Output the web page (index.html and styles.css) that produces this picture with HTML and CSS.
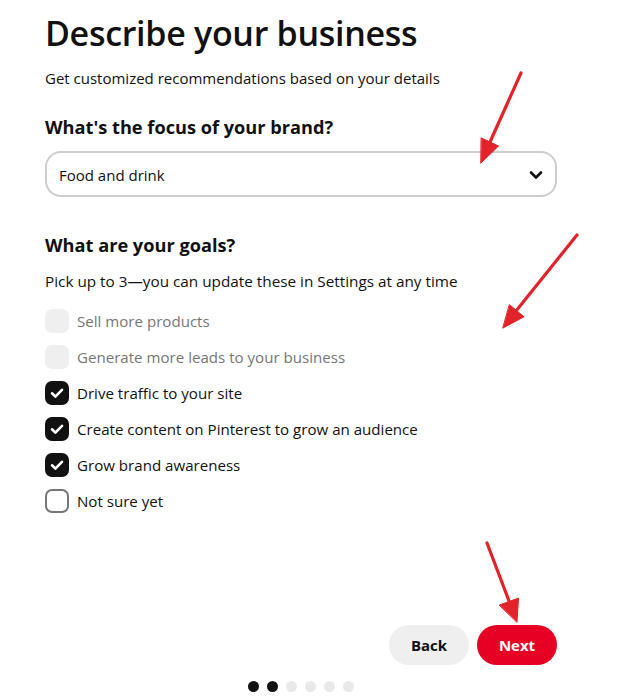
FILE: index.html
```html
<!DOCTYPE html>
<html lang="en">
<head>
<meta charset="utf-8">
<title>Describe your business</title>
<link rel="stylesheet" href="styles.css">
</head>
<body>
<main class="page">
  <h1 class="title">Describe your business</h1>
  <p class="subtitle">Get customized recommendations based on your details</p>

  <h2 class="heading heading-focus">What's the focus of your brand?</h2>
  <div class="select">
    <span class="select-value">Food and drink</span>
    <svg class="chevron" width="14" height="10" viewBox="0 0 14 10"><path d="M2 2.5 L7 7.5 L12 2.5" fill="none" stroke="#111" stroke-width="2.6" stroke-linecap="round" stroke-linejoin="round"/></svg>
  </div>

  <h2 class="heading heading-goals">What are your goals?</h2>
  <p class="hint">Pick up to 3—you can update these in Settings at any time</p>

  <ul class="options">
    <li class="option disabled"><span class="box"></span><span class="label">Sell more products</span></li>
    <li class="option disabled"><span class="box"></span><span class="label">Generate more leads to your business</span></li>
    <li class="option checked"><span class="box"><svg width="24" height="24" viewBox="0 0 24 24"><path d="M7 12.3 L10.4 15.6 L17 8.8" fill="none" stroke="#fff" stroke-width="2.6" stroke-linecap="round" stroke-linejoin="round"/></svg></span><span class="label">Drive traffic to your site</span></li>
    <li class="option checked"><span class="box"><svg width="24" height="24" viewBox="0 0 24 24"><path d="M7 12.3 L10.4 15.6 L17 8.8" fill="none" stroke="#fff" stroke-width="2.6" stroke-linecap="round" stroke-linejoin="round"/></svg></span><span class="label">Create content on Pinterest to grow an audience</span></li>
    <li class="option checked"><span class="box"><svg width="24" height="24" viewBox="0 0 24 24"><path d="M7 12.3 L10.4 15.6 L17 8.8" fill="none" stroke="#fff" stroke-width="2.6" stroke-linecap="round" stroke-linejoin="round"/></svg></span><span class="label">Grow brand awareness</span></li>
    <li class="option unchecked"><span class="box"></span><span class="label">Not sure yet</span></li>
  </ul>

  <div class="actions">
    <button class="btn btn-back">Back</button>
    <button class="btn btn-next">Next</button>
  </div>

  <div class="dots">
    <span class="dot on"></span><span class="dot on"></span><span class="dot"></span><span class="dot"></span><span class="dot"></span><span class="dot"></span>
  </div>
</main>

<svg class="annotations" width="635" height="698" viewBox="0 0 635 698">
  <g stroke="#e3232b" stroke-width="3.2" stroke-linecap="round" fill="#e3232b">
    <line x1="521" y1="73" x2="490" y2="142"/>
    <polygon points="481,163 498.6,146 481.4,138" stroke-width="1" stroke-linejoin="round"/>
    <line x1="577" y1="235" x2="516" y2="311"/>
    <polygon points="503,328 524,316.8 509.6,304.8" stroke-width="1" stroke-linejoin="round"/>
    <line x1="487" y1="543" x2="509" y2="601"/>
    <polygon points="517,622 518.5,598 499.5,605" stroke-width="1" stroke-linejoin="round"/>
  </g>
</svg>
</body>
</html>
```

FILE: styles.css
```css
* { box-sizing: border-box; }
html, body { margin: 0; padding: 0; background: #fff; overflow: hidden; }
body {
  font-family: "Open Sans", "Liberation Sans", sans-serif;
  color: #111;
  width: 635px;
  height: 698px;
  position: relative;
}
.page {
  width: 557px;
  padding: 11px 0 0 45px;
}
.title {
  margin: 0;
  font-size: 34px;
  line-height: 44px;
  font-weight: 600;
  letter-spacing: -0.3px;
}
.subtitle {
  margin: 11px 0 0;
  font-size: 15px;
  line-height: 24px;
}
.heading {
  margin: 0;
  font-size: 18.2px;
  line-height: 28px;
  font-weight: 700;
}
.heading-focus { margin-top: 23px; }
.select {
  margin-top: 10px;
  height: 46px;
  border: 2px solid #cdcdcd;
  border-radius: 16px;
  display: flex;
  align-items: center;
  justify-content: space-between;
  padding: 1px 12px 0 12px;
  font-size: 15px;
}
.chevron { display: block; }
.heading-goals { margin-top: 34px; }
.hint {
  margin: 10px 0 0;
  font-size: 15.3px;
  line-height: 24px;
}
.options {
  list-style: none;
  margin: 16px 0 0;
  padding: 0;
  display: flex;
  flex-direction: column;
  gap: 12px;
}
.option {
  display: flex;
  align-items: center;
  gap: 8px;
  height: 24px;
  font-size: 15.1px;
}
.box {
  width: 24px;
  height: 24px;
  border-radius: 7px;
  flex: none;
  display: block;
}
.box svg { display: block; }
.disabled .box { background: #efefef; }
.disabled .label { color: #767676; }
.checked .box { background: #111; }
.unchecked .box { border: 2px solid #767676; }
.actions {
  margin-top: 112px;
  display: flex;
  justify-content: flex-end;
  gap: 8px;
}
.btn {
  width: 80px;
  height: 40px;
  border: 0;
  border-radius: 20px;
  font-family: inherit;
  font-size: 15px;
  font-weight: 700;
  padding: 0;
}
.btn-back { background: #efefef; color: #111; }
.btn-next { background: #e60023; color: #fff; }
.dots {
  margin-top: 16px;
  display: flex;
  justify-content: center;
  gap: 8px;
}
.dot {
  width: 11px;
  height: 11px;
  border-radius: 50%;
  background: #e9e9e9;
}
.dot.on { background: #111; }
.annotations {
  position: absolute;
  left: 0;
  top: 0;
  pointer-events: none;
}
```
